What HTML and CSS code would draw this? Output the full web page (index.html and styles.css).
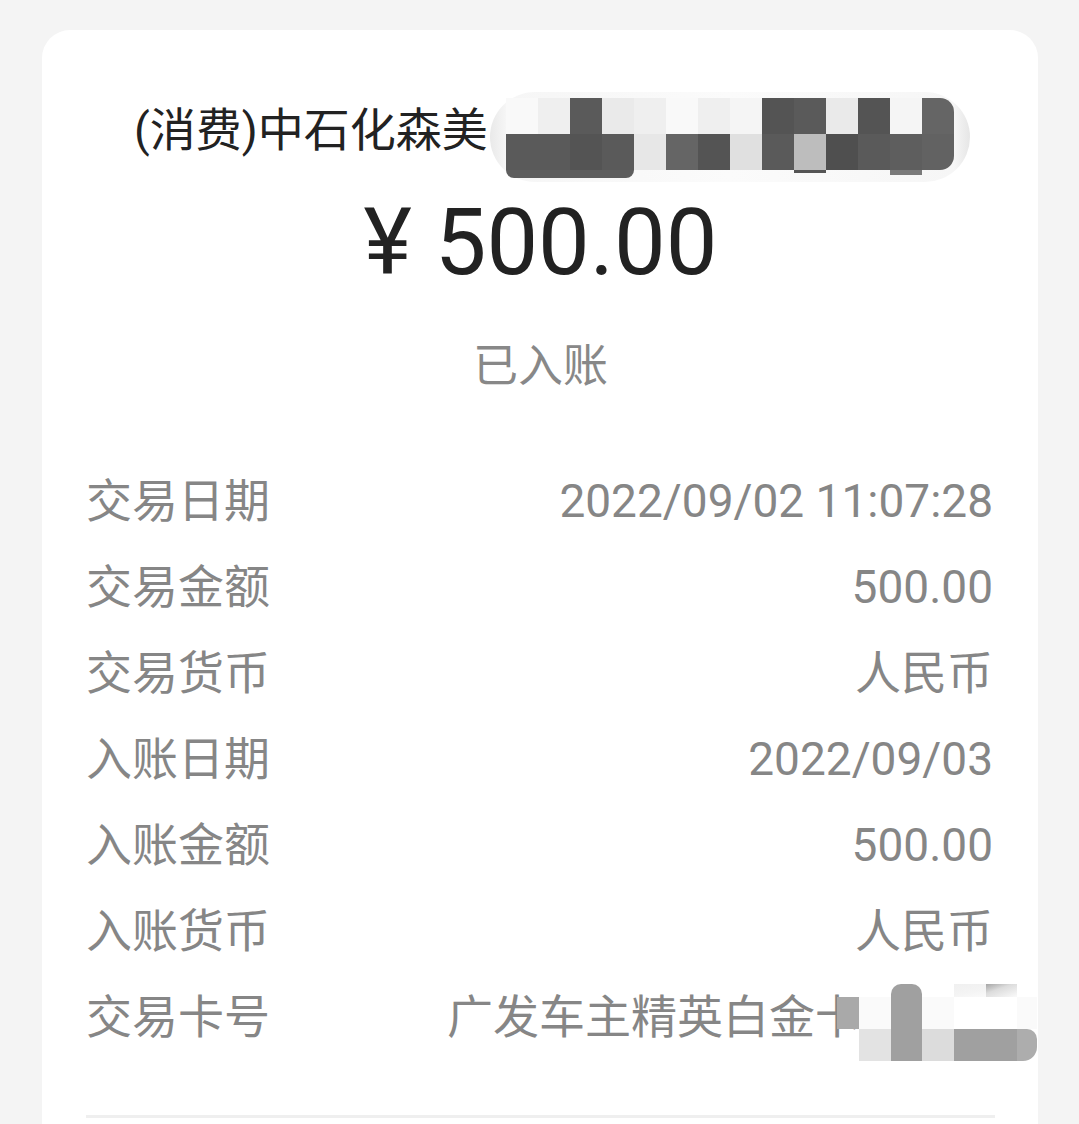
FILE: index.html
```html
<!DOCTYPE html>
<html lang="zh-CN">
<head>
<meta charset="utf-8">
<title>交易详情</title>
<link rel="stylesheet" href="styles.css">
</head>
<body>
<div class="card">
  <div class="merchant">
    <span class="merchant-name">(消费)中石化森美</span>
    <div class="mosaic-title">
      <div class="mosaic-grid">
        <i class="a"></i><i class="b"></i><i class="d"></i><i class="b2"></i><i class="b"></i><i class="a"></i><i class="b"></i><i class="a2"></i><i class="d2"></i><i class="d"></i><i class="b2"></i><i class="d2"></i><i class="a2"></i><i class="d3 tr"></i>
        <i class="d"></i><i class="d"></i><i class="d2"></i><i class="d"></i><i class="c"></i><i class="d3"></i><i class="d2"></i><i class="c2"></i><i class="d"></i><i class="m"></i><i class="d4"></i><i class="d"></i><i class="d5"></i><i class="d6 br"></i>
        <i class="d5 bl"></i><i class="d5"></i><i class="d5"></i><i class="d5 br2"></i><i></i><i></i><i></i><i></i><i></i><i class="thin"></i><i></i><i></i><i class="thin2"></i><i></i>
      </div>
    </div>
  </div>
  <div class="amount">¥ 500.00</div>
  <div class="status">已入账</div>
  <div class="rows">
    <div class="row"><span class="label">交易日期</span><span class="value">2022/09/02 11:07:28</span></div>
    <div class="row"><span class="label">交易金额</span><span class="value">500.00</span></div>
    <div class="row"><span class="label">交易货币</span><span class="value">人民币</span></div>
    <div class="row"><span class="label">入账日期</span><span class="value">2022/09/03</span></div>
    <div class="row"><span class="label">入账金额</span><span class="value">500.00</span></div>
    <div class="row"><span class="label">入账货币</span><span class="value">人民币</span></div>
    <div class="row row-card">
      <span class="label">交易卡号</span>
      <div class="card-value">
        <span class="value">广发车主精英白金卡</span>
        <div class="mosaic-card">
          <i></i><i></i><i class="k1 tr2"></i><i></i><i class="k6"></i><i class="k7"></i><i></i>
          <i class="k2"></i><i class="k0"></i><i class="k1"></i><i class="k0"></i><i class="kw"></i><i class="kw"></i><i class="k0"></i>
          <i></i><i class="k3"></i><i class="k1"></i><i class="k4"></i><i class="k1"></i><i class="k1"></i><i class="k5 br3"></i>
        </div>
      </div>
    </div>
  </div>
  <div class="divider"></div>
</div>
</body>
</html>
```

FILE: styles.css
```css
html, body {
  margin: 0;
  padding: 0;
}

body {
  background: #f4f4f4;
  font-family: Roboto, "Noto Sans CJK SC", sans-serif;
  overflow: hidden;
}

.card {
  margin: 30px 0 0 42px;
  width: 996px;
  background: #ffffff;
  border-radius: 28px 28px 0 0;
  padding: 70px 45px 200px 46px;
  box-sizing: border-box;
}

.merchant {
  display: flex;
  align-items: flex-start;
  padding-left: 46px;
  height: 60px;
}

.merchant-name {
  font-size: 46px;
  line-height: 60px;
  color: #222222;
  white-space: nowrap;
}

.mosaic-title {
  margin: -8px 0 0 2px;
  padding: 6px 16px 4px 16px;
  border-radius: 46px;
  background: linear-gradient(to right, #e9e9e9 0, #f6f6f6 16px, #fbfbfb 50%, #f6f6f6 calc(100% - 16px), #e6e6e6 100%);
}

.mosaic-grid {
  display: grid;
  grid-template-columns: repeat(14, 32px);
  grid-template-rows: 36px 36px 8px;
}

.mosaic-grid i { display: block; }
.mosaic-grid .a { background: #f9f9f9; }
.mosaic-grid .a2 { background: #f5f5f5; }
.mosaic-grid .b { background: #efefef; }
.mosaic-grid .b2 { background: #eaeaea; }
.mosaic-grid .c { background: #e7e7e7; }
.mosaic-grid .c2 { background: #e0e0e0; }
.mosaic-grid .m { background: #bdbdbd; }
.mosaic-grid .d { background: #5a5a5a; }
.mosaic-grid .d2 { background: #545454; }
.mosaic-grid .d3 { background: #656565; }
.mosaic-grid .d4 { background: #4f4f4f; }
.mosaic-grid .d5 { background: #5e5e5e; }
.mosaic-grid .d6 { background: #626262; }
.mosaic-grid .tr { border-top-right-radius: 14px; }
.mosaic-grid .br { border-bottom-right-radius: 14px; }
.mosaic-grid .bl { border-bottom-left-radius: 10px; }
.mosaic-grid .br2 { border-bottom-right-radius: 8px; }
.mosaic-grid .thin { background: linear-gradient(#555 0 3px, transparent 3px); }
.mosaic-grid .thin2 { background: linear-gradient(#7a7a7a 0 5px, transparent 5px); }

.amount {
  margin-top: 28px;
  text-align: center;
  font-size: 92px;
  line-height: 110px;
  color: #222222;
}

.status {
  margin-top: 39px;
  text-align: center;
  font-size: 45px;
  line-height: 60px;
  color: #888888;
}

.rows {
  margin-top: 61px;
  display: flex;
  flex-direction: column;
}

.row {
  display: flex;
  justify-content: space-between;
  align-items: flex-start;
  height: 86px;
  font-size: 46px;
  line-height: 86px;
  color: #868686;
}

.label, .value {
  white-space: nowrap;
}

.label {
  margin-left: -2px;
}

.card-value {
  display: flex;
  align-items: flex-start;
  margin-right: -44px;
}

.mosaic-card {
  margin: 10px 0 0 -24px;
  display: grid;
  grid-template-columns: 22px 32px 31px 32px 32px 31px 20px;
  grid-template-rows: 13px 32px 32px;
}

.mosaic-card i { display: block; }
.mosaic-card .k0 { background: #fafafa; }
.mosaic-card .kw { background: #ffffff; }
.mosaic-card .k1 { background: #a0a0a0; }
.mosaic-card .k2 { background: #a9a9a9; }
.mosaic-card .k3 { background: #e3e3e3; }
.mosaic-card .k4 { background: #dcdcdc; }
.mosaic-card .k5 { background: #adadad; }
.mosaic-card .k6 { background: linear-gradient(170deg, #f0f0f0 0, #f4f4f4 60%, #fafafa 100%); }
.mosaic-card .k7 { background: linear-gradient(160deg, #a5a5a5 0, #dcdcdc 40%, #fafafa 100%); }
.mosaic-card .tr2 { border-radius: 10px 10px 0 0; }
.mosaic-card .br3 { border-radius: 0 10px 14px 0; }

.divider {
  margin: 55px -2px 0;
  height: 3px;
  background: #efefef;
}
```
